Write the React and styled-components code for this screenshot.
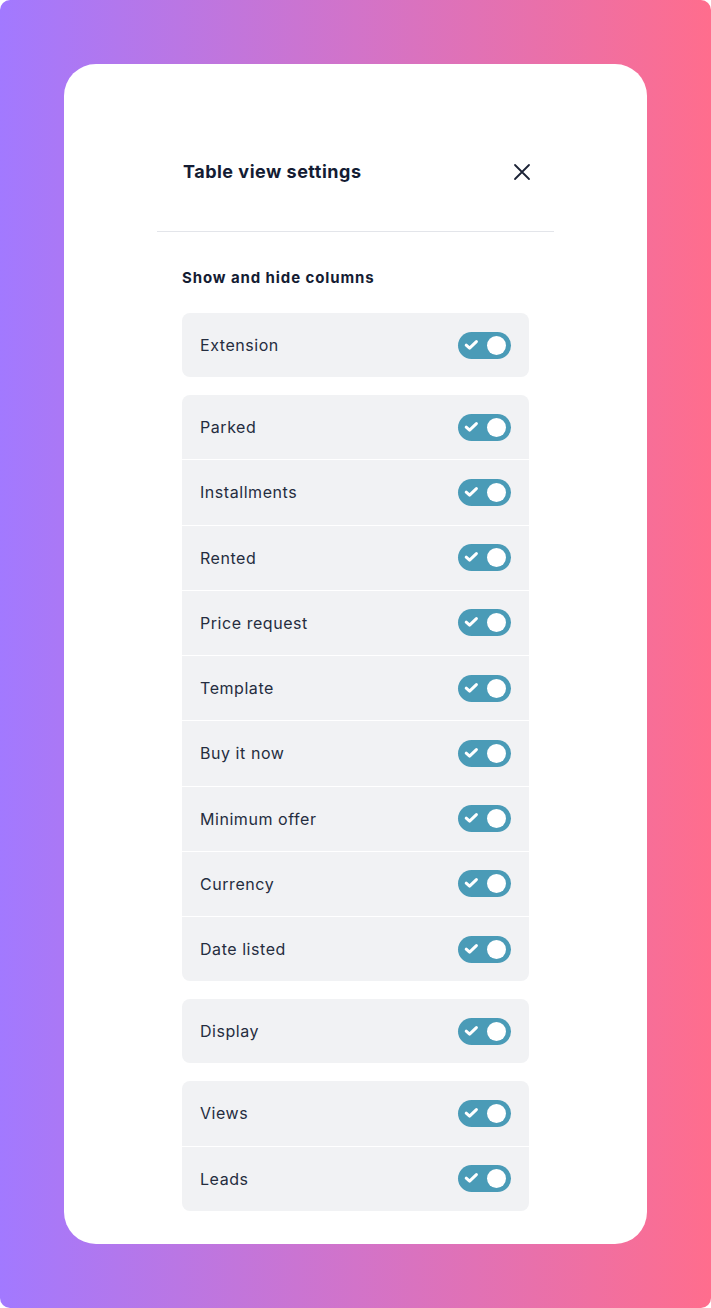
import React, { useState } from "react";
import styled, { createGlobalStyle } from "styled-components";

const GlobalStyle = createGlobalStyle`
  html, body {
    margin: 0;
    padding: 0;
    background: #ffffff;
  }
  * {
    box-sizing: border-box;
  }
`;

const Page = styled.div`
  width: 711px;
  height: 1308px;
  padding: 64px;
  border-radius: 10px;
  background: linear-gradient(90deg, #a279ff 0%, #d273c9 50%, #ff6d8d 100%);
  font-family: Inter, "Noto Sans", sans-serif;
`;

const Card = styled.div`
  height: 1180px;
  background: #ffffff;
  border-radius: 32px;
  padding: 0 118px;
`;

const Header = styled.div`
  display: flex;
  align-items: center;
  justify-content: space-between;
  margin: 0 -25px;
  padding: 96px 20px 47px 26px;
  border-bottom: 1px solid #e3e5ea;
`;

const Title = styled.h1`
  margin: 0;
  font-size: 18px;
  line-height: 24px;
  font-weight: 700;
  color: #141c33;
  letter-spacing: 0.5px;
`;

const CloseButton = styled.button`
  border: none;
  background: none;
  padding: 0;
  width: 24px;
  height: 24px;
  display: flex;
  align-items: center;
  justify-content: center;
  color: #1b2236;
  cursor: pointer;
`;

const SectionTitle = styled.h2`
  margin: 36px 0 25px;
  font-size: 15px;
  line-height: 20px;
  font-weight: 700;
  color: #141c33;
  letter-spacing: 0.9px;
`;

const Groups = styled.div`
  display: flex;
  flex-direction: column;
  gap: 18px;
`;

const Group = styled.div`
  display: flex;
  flex-direction: column;
  gap: 1px;
  border-radius: 8px;
  overflow: hidden;
  background: #ffffff;
`;

const Row = styled.div`
  height: ${(p) => (p.$single ? "64px" : "64.25px")};
  display: flex;
  align-items: center;
  justify-content: space-between;
  padding: 0 18px;
  background: #f1f2f4;
`;

const Label = styled.span`
  font-size: 16px;
  color: #252d3f;
  letter-spacing: 0.55px;
`;

const Toggle = styled.button`
  position: relative;
  width: 53px;
  height: 27px;
  border: none;
  border-radius: 14px;
  padding: 0;
  cursor: pointer;
  background: ${(p) => (p.$on ? "#4a9bb7" : "#c3c8d0")};
`;

const Knob = styled.span`
  position: absolute;
  top: 4px;
  left: ${(p) => (p.$on ? "29px" : "4px")};
  width: 19px;
  height: 19px;
  border-radius: 50%;
  background: #ffffff;
  transition: left 0.15s ease-in-out;
`;

const Check = styled.svg`
  position: absolute;
  left: 6px;
  top: 7px;
`;

const groups = [
  ["Extension"],
  [
    "Parked",
    "Installments",
    "Rented",
    "Price request",
    "Template",
    "Buy it now",
    "Minimum offer",
    "Currency",
    "Date listed",
  ],
  ["Display"],
  ["Views", "Leads"],
];

const Switch = () => {
  const [on, setOn] = useState(true);
  return (
    <Toggle $on={on} onClick={() => setOn(!on)}>
      {on && (
        <Check width="15" height="12" viewBox="0 0 15 12">
          <path
            d="M2.2 6.2 L5.6 9.2 L12.4 2.6"
            fill="none"
            stroke="#ffffff"
            strokeWidth="3"
            strokeLinecap="round"
            strokeLinejoin="round"
          />
        </Check>
      )}
      <Knob $on={on} />
    </Toggle>
  );
};

const App = () => {
  return (
    <>
      <GlobalStyle />
      <Page>
        <Card>
          <Header>
            <Title>Table view settings</Title>
            <CloseButton aria-label="Close">
              <svg width="18" height="18" viewBox="0 0 18 18">
                <path
                  d="M2 2 L16 16 M16 2 L2 16"
                  stroke="currentColor"
                  strokeWidth="1.8"
                  strokeLinecap="round"
                />
              </svg>
            </CloseButton>
          </Header>
          <SectionTitle>Show and hide columns</SectionTitle>
          <Groups>
            {groups.map((g, i) => (
              <Group key={i}>
                {g.map((name) => (
                  <Row key={name} $single={g.length === 1}>
                    <Label>{name}</Label>
                    <Switch />
                  </Row>
                ))}
              </Group>
            ))}
          </Groups>
        </Card>
      </Page>
    </>
  );
};

export default App;
